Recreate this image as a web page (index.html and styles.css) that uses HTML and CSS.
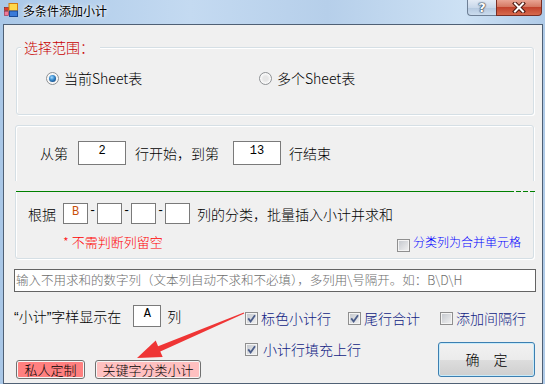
FILE: index.html
```html
<!DOCTYPE html>
<html>
<head>
  <title>多条件添加小计</title>
  <link rel="stylesheet" href="styles.css">
</head>
<body>

<div class="window">
  <div class="titlebar">
    <svg class="app-icon" viewBox="0 0 14 14">
      <rect x="0.5" y="4.5" width="4" height="3" fill="#e23a2a" stroke="#8a1a10" stroke-width="0.6"/>
      <rect x="0.5" y="8.5" width="4" height="4" fill="#f07a9a" stroke="#9a2a40" stroke-width="0.6"/>
      <rect x="5" y="0.5" width="8.5" height="7.5" fill="#ffd84a" stroke="#d07a10"/>
      <rect x="5.5" y="8" width="8" height="5.5" fill="#3a7ad8" stroke="#1a4a98"/>
    </svg>
    <span class="title">多条件添加小计</span>
    <div class="caption">
      <span class="cap help">?</span>
      <span class="cap close">
        <svg width="14" height="11" viewBox="0 0 14 11">
          <path d="M3 1.5 L11 9.5 M11 1.5 L3 9.5" stroke="#4a1810" stroke-width="4" stroke-linecap="square"/>
          <path d="M3 1.5 L11 9.5 M11 1.5 L3 9.5" stroke="#fff" stroke-width="2" stroke-linecap="square"/>
        </svg>
      </span>
    </div>
  </div>

  <div class="client">
    <div class="group g-range">
      <span class="legend">选择范围：</span>
      <div class="radios">
        <label class="radio-opt"><span class="radio on"></span>当前Sheet表</label>
        <label class="radio-opt"><span class="radio"></span>多个Sheet表</label>
      </div>
    </div>

    <div class="group g-rows">
      <div class="row-range">
        <span>从第</span>
        <span class="num-box">2</span>
        <span class="ml9">行开始，到第</span>
        <span class="num-box ml14">13</span>
        <span class="ml8">行结束</span>
      </div>
      <div class="divider"></div>
      <div class="row-cols">
        <span>根据</span>
        <span class="col-box first">B</span><span class="sep">-</span><span class="col-box"></span><span class="sep">-</span><span class="col-box"></span><span class="sep">-</span><span class="col-box"></span>
        <span class="col-text">列的分类，批量插入小计并求和</span>
      </div>
      <div class="row-note">
        <span class="note">* 不需判断列留空</span>
        <label class="merge"><span class="cb"></span><span class="merge-text">分类列为合并单元格</span></label>
      </div>
    </div>

    <div class="exclude">输入不用求和的数字列（文本列自动不求和不必填），多列用\号隔开。如：B\D\H</div>

    <div class="bottom">
      <div class="bottom-left">
        <div class="show-row">
          <span><span class="q">“</span>小计<span class="q">”</span>字样显示在</span>
          <span class="a-box">A</span>
          <span class="ml6">列</span>
        </div>
        <div class="tag-btns">
          <span class="tag-btn red">私人定制</span>
          <span class="tag-btn pink">关键字分类小计</span>
        </div>
      </div>
      <div class="bottom-right">
        <div class="opt-row">
          <label class="opt w103"><span class="cb on"><svg viewBox="0 0 11 11"><path d="M2.2 5.4 L4.6 8.4 L9 2.2" fill="none" stroke="#4b5d8a" stroke-width="1.8"/></svg></span>标色小计行</label>
          <label class="opt w92"><span class="cb on"><svg viewBox="0 0 11 11"><path d="M2.2 5.4 L4.6 8.4 L9 2.2" fill="none" stroke="#4b5d8a" stroke-width="1.8"/></svg></span>尾行合计</label>
          <label class="opt"><span class="cb"></span>添加间隔行</label>
        </div>
        <div class="opt-row2">
          <label class="opt tight"><span class="cb on"><svg viewBox="0 0 11 11"><path d="M2.2 5.4 L4.6 8.4 L9 2.2" fill="none" stroke="#4b5d8a" stroke-width="1.8"/></svg></span>小计行填充上行</label>
          <span class="ok-btn">确&emsp;定</span>
        </div>
      </div>
    </div>
  </div>

  <svg class="arrow" viewBox="0 0 545 384">
    <polygon points="243.8,312.4 158.1,346.2 155.7,340.5 137,358 162.7,357.1 160.3,351.4 244.2,313.6" fill="#ef3535"/>
  </svg>
</div>

</body>
</html>
```

FILE: styles.css
```css
* {
  box-sizing: border-box;
}

body {
  margin: 0;
  font-family: "Noto Sans CJK SC", "Noto Sans", sans-serif;
  font-size: 14px;
  font-weight: 300;
  color: #000;
  background: #b9d1ea;
}

.window {
  position: relative;
  width: 545px;
  height: 384px;
  padding: 0 2px 0 3px;
  background: linear-gradient(to right, #a9c7e7 0%, #c4daf1 35%, #b6cfea 60%, #cde1f4 85%, #b0cbe8 100%);
  overflow: hidden;
}

/* title bar */
.titlebar {
  display: flex;
  align-items: flex-start;
  height: 24px;
}

.app-icon {
  width: 14px;
  height: 14px;
  margin: 3px 0 0 1px;
}

.title {
  margin-left: 5px;
  font-size: 12px;
  font-weight: 400;
  line-height: 21px;
  text-shadow: 0 0 6px #fff, 0 0 3px #fff;
}

.caption {
  display: flex;
  margin-left: auto;
  margin-right: 1px;
}

.cap {
  height: 16px;
  display: flex;
  align-items: center;
  justify-content: center;
}

.help {
  width: 29px;
  border: 1px solid #6e7f95;
  border-top: 0;
  border-right: 0;
  border-radius: 0 0 0 4px;
  background: linear-gradient(#e3ebf5, #c9d8ea 50%, #b4c8df 51%, #cbdcee);
  color: #fff;
  font: bold 13px "DejaVu Sans", sans-serif;
  text-shadow: 0 0 1px #1e2e44, 0 0 1px #1e2e44, 0 0 2px #1e2e44;
}

.close {
  width: 46px;
  border: 1px solid #7a2e24;
  border-top: 0;
  border-radius: 0 0 4px 0;
  background: linear-gradient(#e9a594, #d57963 45%, #c2432d 50%, #d76a4d);
}

/* client area */
.client {
  height: 360px;
  border: 1px solid #4f6075;
  background: #f0f0f0;
}

.group {
  position: relative;
  border: 1px solid #d5dfe5;
  border-radius: 3px;
  box-shadow: inset 1px 1px 0 #fff, 1px 1px 0 #fff;
}

.legend {
  position: absolute;
  top: -9px;
  left: 4px;
  padding: 0 6px 0 3px;
  background: #f0f0f0;
  color: #c80000;
  line-height: 16px;
}

.g-range {
  width: 518px;
  height: 68px;
  margin: 22px 0 0 12px;
}

.radios {
  display: flex;
  padding: 22px 0 0 29px;
  line-height: 16px;
}

.radio-opt {
  display: flex;
  align-items: center;
  gap: 5px;
  width: 213px;
}

.radio {
  width: 13px;
  height: 13px;
  border-radius: 50%;
  border: 1px solid #8f9295;
  background: radial-gradient(circle, #e6e6e6 30%, #fafafa 65%, #d0d0d0 100%);
  display: flex;
  align-items: center;
  justify-content: center;
}

.radio.on::after {
  content: "";
  width: 7px;
  height: 7px;
  border-radius: 50%;
  background: radial-gradient(circle at 40% 35%, #a8dcff 0, #3b8ed0 40%, #0b3d78 90%);
}

.g-rows {
  width: 519px;
  height: 134px;
  margin: 10px 0 0 11px;
}

.row-range {
  display: flex;
  align-items: center;
  height: 24px;
  margin-top: 15px;
  padding-left: 24px;
  line-height: 16px;
}

.num-box {
  width: 48px;
  height: 24px;
  margin-left: 10px;
  border: 1px solid #7a7a7a;
  background: #fff;
  text-align: center;
  font: 12px "Liberation Mono", monospace;
  line-height: 19px;
}

.ml6 { margin-left: 6px; }
.ml8 { margin-left: 8px; }
.ml9 { margin-left: 9px; }
.ml14 { margin-left: 14px; }

.divider {
  position: absolute;
  top: 55px;
  left: -2px;
  width: 523px;
  height: 11px;
  background: #f0f0f0;
}

.divider::after {
  content: "";
  position: absolute;
  left: 2px;
  bottom: 0;
  width: 519px;
  height: 1px;
  background: linear-gradient(to right,
    #008000 0 498px, transparent 498px 500px,
    #008000 500px 505px, transparent 505px 507px,
    #008000 507px 512px, transparent 512px 514px,
    #008000 514px 519px);
}

.row-cols {
  display: flex;
  align-items: center;
  height: 21px;
  margin-top: 38px;
  padding-left: 12px;
  line-height: 16px;
}

.col-box {
  width: 25px;
  height: 21px;
  border: 1px solid #7a7a7a;
  background: #fff;
  text-align: center;
  font: 12px "Liberation Mono", monospace;
  line-height: 16px;
  color: #c8500a;
}

.col-box.first {
  margin-left: 7px;
}

.sep {
  width: 9px;
  text-align: center;
  font: 12px "Liberation Mono", monospace;
  line-height: 16px;
  align-self: flex-start;
}

.col-text {
  margin-left: 7px;
}

.row-note {
  display: flex;
  align-items: flex-start;
  height: 20px;
  margin-top: 11px;
  padding: 0 12px 0 47px;
}

.note {
  margin-top: -1px;
  color: #ff0000;
  font-size: 13px;
  line-height: 16px;
}

.merge {
  display: flex;
  align-items: flex-start;
  margin-left: auto;
  gap: 3px;
  color: #0000ff;
  font-size: 12px;
}

.merge .cb {
  margin-top: 4px;
}

.merge-text {
  line-height: 14px;
}

/* checkbox */
.cb {
  width: 13px;
  height: 13px;
  flex: none;
  border: 1px solid #8f8f8f;
  background: linear-gradient(135deg, #c2c6cc, #f3f3f3);
  box-shadow: inset 0 0 0 1px #f4f4f4;
}

.cb svg {
  display: block;
  width: 11px;
  height: 11px;
}

.exclude {
  width: 522px;
  height: 23px;
  margin: 10px 0 0 10px;
  padding-left: 1px;
  border: 1px solid #646464;
  background: #fff;
  color: #6d6d6d;
  font-size: 12.5px;
  line-height: 20px;
  white-space: nowrap;
  overflow: hidden;
}

.bottom {
  display: flex;
  margin: 13px 0 0 10px;
}

.bottom-left {
  width: 231px;
}

.show-row {
  display: flex;
  align-items: center;
  height: 22px;
  line-height: 16px;
}

.q {
  font-family: "Liberation Sans", sans-serif;
}

.a-box {
  width: 28px;
  height: 22px;
  margin-left: 12px;
  border: 1px solid #7a7a7a;
  background: #fff;
  text-align: center;
  font: 12px "Liberation Mono", monospace;
  line-height: 16px;
}

.tag-btns {
  display: flex;
  gap: 10px;
  margin: 33px 0 0 2px;
}

.tag-btn {
  height: 19px;
  padding: 1px;
  border: 1px solid #707070;
  border-radius: 3px;
  font-size: 13px;
  line-height: 15px;
  text-align: center;
}

.tag-btn.red {
  width: 69px;
  background: linear-gradient(#ff8080, #ff8080) content-box, #f6f6f6;
}

.tag-btn.pink {
  width: 106px;
  background: linear-gradient(#ffc0c0, #ffc0c0) content-box, #f6f6f6;
}

.bottom-right {
  flex: 1;
  padding-top: 3px;
}

.opt-row {
  display: flex;
  height: 20px;
}

.opt {
  display: flex;
  align-items: center;
  gap: 3px;
  color: #101c84;
  line-height: 20px;
}

.w103 { width: 103px; }
.w92 { width: 92px; }

.opt-row2 {
  display: flex;
  align-items: flex-start;
  margin-top: 14px;
}

.opt.tight {
  line-height: 14px;
  gap: 5px;
}

.ok-btn {
  width: 97px;
  height: 35px;
  margin: 0 7px 0 auto;
  border: 1px solid #3c7fb1;
  border-radius: 3px;
  background: linear-gradient(#f2f2f2, #ebebeb 50%, #dddddd 51%, #cfcfcf);
  box-shadow: inset 0 0 0 1px #c8ebfa;
  text-align: center;
  line-height: 33px;
}

.arrow {
  position: absolute;
  left: 0;
  top: 0;
  width: 545px;
  height: 384px;
  pointer-events: none;
}
```
